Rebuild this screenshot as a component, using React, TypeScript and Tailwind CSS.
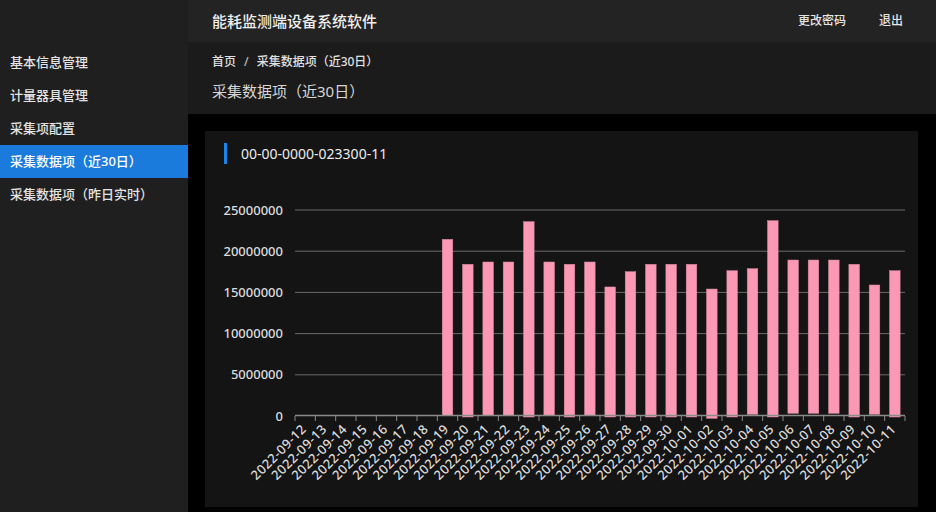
import React from "react";

type MenuItem = {
    label: string;
    active?: boolean;
};

const MENU: MenuItem[] = [
    { label: "基本信息管理" },
    { label: "计量器具管理" },
    { label: "采集项配置" },
    { label: "采集数据项（近30日）", active: true },
    { label: "采集数据项（昨日实时）" },
];

const FONT = '"Noto Sans", "Noto Sans CJK SC", sans-serif';

// daily totals; offset nudges each bar's base a pixel or two off the axis
const DATES = [
    "2022-09-12", "2022-09-13", "2022-09-14", "2022-09-15", "2022-09-16", "2022-09-17", "2022-09-18",
    "2022-09-19", "2022-09-20", "2022-09-21", "2022-09-22", "2022-09-23", "2022-09-24", "2022-09-25",
    "2022-09-26", "2022-09-27", "2022-09-28", "2022-09-29", "2022-09-30", "2022-10-01", "2022-10-02",
    "2022-10-03", "2022-10-04", "2022-10-05", "2022-10-06", "2022-10-07", "2022-10-08", "2022-10-09",
    "2022-10-10", "2022-10-11",
];

const VALUES: (number | null)[] = [
    null, null, null, null, null, null, null,
    21440000, 18410000, 18690000, 18690000, 23580000, 18690000, 18410000,
    18690000, 15660000, 17510000, 18410000, 18410000, 18410000, 15410000,
    17630000, 17880000, 23700000, 18930000, 18930000, 18930000, 18410000,
    15900000, 17630000,
];

const OFFSETS = [
    0, 0, 0, 0, 0, 0, 0,
    -0.7, 1, -1, -0.7, 1, -0.7, 1,
    -0.7, 1, 1, 1, 1, 1, 2.3,
    1, -1.7, 1, -2.7, -2.7, -2.7, 1,
    -1.7, 1,
];

const TICKS = [25000000, 20000000, 15000000, 10000000, 5000000, 0];

function BarChart() {
    const left = 90;
    const right = 700;
    const top = 35;
    const bottom = 241;
    const max = 25000000;
    const step = (right - left) / DATES.length;
    const barW = 10.6;
    const y = (v: number) => bottom - (v / max) * (bottom - top);

    return (
        <svg width={713} height={332} className="block" style={{ fontFamily: FONT }}>
            {TICKS.map((t) => (
                <g key={t}>
                    {t > 0 && <line x1={left} x2={right} y1={y(t)} y2={y(t)} stroke="#6a6a6a" strokeWidth={1} />}
                    <text x={78} y={y(t) + 4.5} textAnchor="end" fontSize={13} fontWeight={500} fill="#dcdcdc">
                        {t}
                    </text>
                </g>
            ))}

            {VALUES.map((v, i) => {
                if (v === null) return null;
                const cx = left + (i + 0.5) * step;
                const base = bottom + OFFSETS[i];
                return (
                    <rect
                        key={DATES[i]}
                        x={cx - barW / 2}
                        y={y(v)}
                        width={barW}
                        height={base - y(v)}
                        fill="#fb98b4"
                        stroke="#d98aa0"
                        strokeWidth={0.5}
                    />
                );
            })}

            <line x1={left} x2={right} y1={bottom - 0.5} y2={bottom - 0.5} stroke="#8a8a8a" strokeWidth={1.5} />
            {DATES.map((_, i) => (
                <line key={i} x1={left + i * step} x2={left + i * step} y1={bottom} y2={bottom + 5} stroke="#8a8a8a" strokeWidth={1} />
            ))}
            <line x1={right} x2={right} y1={bottom} y2={bottom + 5} stroke="#8a8a8a" strokeWidth={1} />

            {DATES.map((d, i) => {
                const cx = left + (i + 0.5) * step + 2;
                const ly = bottom + 14;
                return (
                    <text
                        key={d}
                        x={cx}
                        y={ly}
                        textAnchor="end"
                        fontSize={13}
                        fontWeight={500}
                        letterSpacing={0.4}
                        fill="#dcdcdc"
                        transform={`rotate(-45 ${cx} ${ly})`}
                    >
                        {d}
                    </text>
                );
            })}
        </svg>
    );
}

export default function App() {
    return (
        <div className="flex h-[512px] w-[936px] overflow-hidden bg-black text-[#e6e6e6]" style={{ fontFamily: FONT }}>
            <aside className="flex w-[188px] shrink-0 flex-col bg-[#1f1f1f] pt-[46px]">
                {MENU.map((item) => (
                    <div
                        key={item.label}
                        className={`flex h-[33px] items-center px-[10px] text-[13px] font-medium ${item.active ? "bg-[#1a7bdc] text-white" : "text-[#e4e4e4]"}`}
                    >
                        {item.label}
                    </div>
                ))}
            </aside>

            <div className="flex min-w-0 flex-1 flex-col">
                <header className="flex h-[42px] shrink-0 items-center bg-[#232323] pl-[24px] pr-[33px]">
                    <h1 className="flex-1 text-[15px] font-medium text-[#eeeeee]">能耗监测端设备系统软件</h1>
                    <span className="text-[12px] font-medium text-[#e6e6e6]">更改密码</span>
                    <span className="ml-[33px] text-[12px] font-medium text-[#e6e6e6]">退出</span>
                </header>

                <div className="flex h-[72px] shrink-0 flex-col bg-[#1b1b1b] pl-[24px] pt-[11px]">
                    <div className="flex items-center text-[12px] font-medium text-[#e0e0e0]">
                        <span>首页</span>
                        <span className="mx-[8px] text-[#bdbdbd]">/</span>
                        <span>采集数据项（近30日）</span>
                    </div>
                    <div className="mt-[9px] text-[15px] text-[#d6d6d6]">采集数据项（近30日）</div>
                </div>

                <main className="flex-1 p-[17px] pr-[18px]">
                    <section className="flex h-[376px] flex-col bg-[#141414]">
                        <div className="flex h-[44px] items-center pl-[19px]">
                            <span className="mr-[14px] h-[21px] w-[3px] bg-[#1a86e8]" />
                            <span className="text-[14px] text-[#ececec]">00-00-0000-023300-11</span>
                        </div>
                        <BarChart />
                    </section>
                </main>
            </div>
        </div>
    );
}
